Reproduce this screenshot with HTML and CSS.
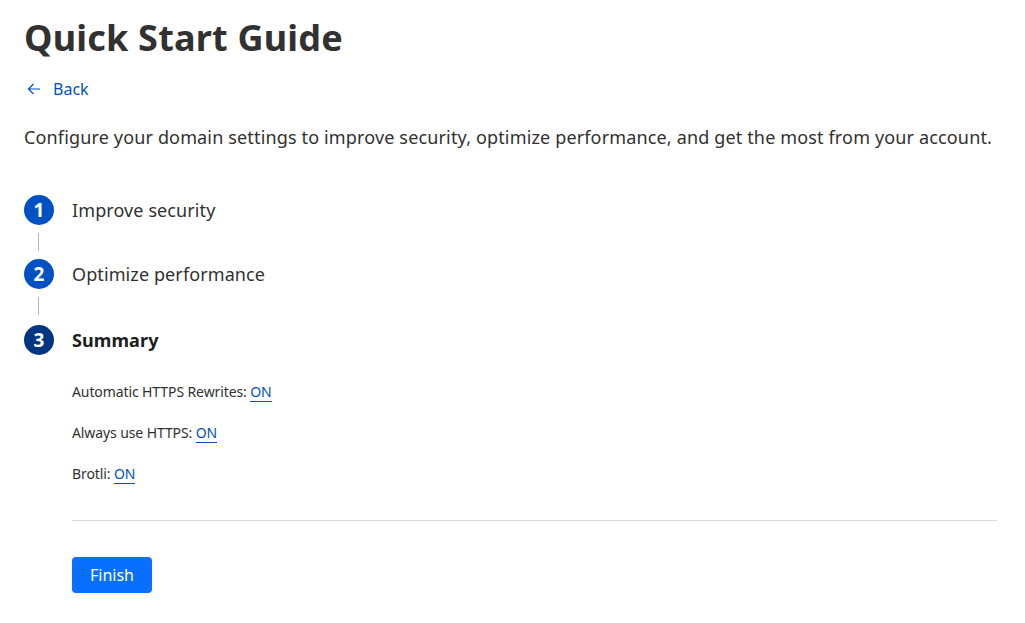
FILE: index.html
```html
<!DOCTYPE html>
<html lang="en">
<head>
<meta charset="utf-8">
<title>Quick Start Guide</title>
<link rel="stylesheet" href="styles.css">
</head>
<body>
<main class="page">
  <h1 class="title">Quick Start Guide</h1>
  <a class="back" href="#">
    <svg class="back-icon" width="16" height="16" viewBox="0 0 16 16" aria-hidden="true"><path d="M14 8H2.5M7.5 3 2.5 8l5 5" fill="none" stroke="currentColor" stroke-width="1.2"/></svg>
    <span>Back</span>
  </a>
  <p class="intro">Configure your domain settings to improve security, optimize performance, and get the most from your account.</p>
  <ol class="steps">
    <li class="step">
      <span class="badge">1</span>
      <span class="step-label">Improve security</span>
    </li>
    <li class="connector"><span class="line"></span></li>
    <li class="step">
      <span class="badge">2</span>
      <span class="step-label">Optimize performance</span>
    </li>
    <li class="connector"><span class="line"></span></li>
    <li class="step active">
      <span class="badge">3</span>
      <span class="step-label">Summary</span>
    </li>
  </ol>
  <section class="summary">
    <p class="setting">Automatic HTTPS Rewrites: <a class="on" href="#">ON</a></p>
    <p class="setting">Always use HTTPS: <a class="on" href="#">ON</a></p>
    <p class="setting">Brotli: <a class="on" href="#">ON</a></p>
    <hr class="divider">
    <button class="finish" type="button">Finish</button>
  </section>
</main>
</body>
</html>
```

FILE: styles.css
```css
* { box-sizing: border-box; }
html, body { margin: 0; padding: 0; background: #fff; }
body {
  font-family: "Noto Sans", "Open Sans", "Liberation Sans", sans-serif;
  color: #313131;
}
.page {
  padding: 14px 28px 0 24px;
}
.title {
  margin: 0;
  font-size: 36px;
  font-weight: 700;
  line-height: 48px;
  color: #313131;
  letter-spacing: 0.2px;
}
.back {
  display: inline-flex;
  align-items: center;
  gap: 11px;
  margin-top: 15px;
  color: #0051c3;
  text-decoration: none;
  font-size: 16px;
  line-height: 24px;
  padding-left: 2px;
}
.back-icon { display: block; }
.intro {
  margin: 22px 0 0;
  font-size: 18px;
  line-height: 26px;
  letter-spacing: 0.15px;
}
.steps {
  list-style: none;
  margin: 45px 0 0;
  padding: 0;
}
.step {
  display: flex;
  align-items: center;
  gap: 18px;
  height: 30px;
}
.step.active { margin-top: 2px; }
.badge {
  flex: none;
  width: 30px;
  height: 30px;
  border-radius: 50%;
  background: #0051c3;
  color: #fff;
  font-size: 19px;
  font-weight: 700;
  display: flex;
  align-items: center;
  justify-content: center;
  line-height: 1;
}
.active .badge { background: #003681; }
.step-label {
  font-size: 18px;
  line-height: 26px;
  letter-spacing: 0.1px;
}
.active .step-label { font-weight: 700; color: #1d1d1d; }
.connector {
  height: 34px;
  display: flex;
  align-items: center;
  padding-left: 14px;
}
.connector .line {
  width: 1px;
  height: 18px;
  background: #b5b5b5;
}
.summary {
  padding-left: 48px;
  margin-top: 26px;
}
.setting {
  margin: 0 0 20px;
  font-size: 14px;
  line-height: 21px;
  letter-spacing: -0.1px;
}
.on {
  color: #0051c3;
  text-decoration: none;
  border-bottom: 1px solid #0051c3;
}
.divider {
  margin: 36px 0 36px;
  border: 0;
  border-top: 1px solid #d9d9d9;
}
.finish {
  font-family: inherit;
  background: #086fff;
  color: #fff;
  border: 0;
  border-radius: 4px;
  font-size: 16px;
  height: 36px;
  padding: 0 18px;
  cursor: pointer;
}
```
